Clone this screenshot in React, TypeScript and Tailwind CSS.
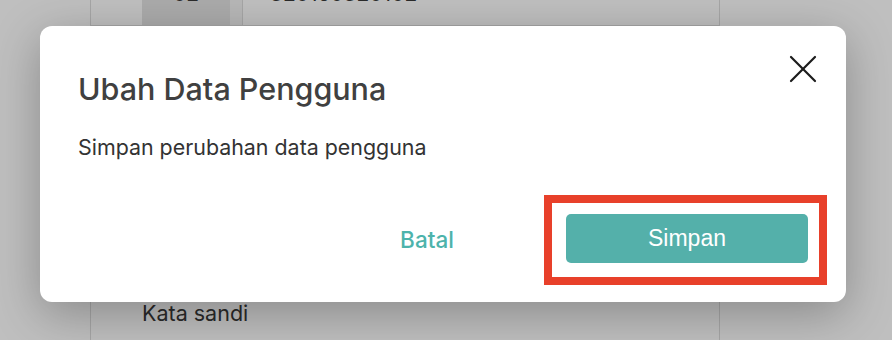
import { X } from "lucide-react";

export default function App() {
  return (
    <div className="relative h-[340px] w-[892px] overflow-hidden bg-white font-['Inter',sans-serif]">
      {/* Page underneath the dialog */}
      <div className="ml-[90px] flex h-full w-[630px] flex-col border-x border-[#dedede]">
        <div className="-mt-[24px] flex h-[50px] items-end border-b border-[#dedede]">
          <div className="ml-[51px] flex h-full w-[88px] items-end justify-center bg-[#e5e5e5] pb-[21px] text-[21px] leading-none text-[#383838]">
            02
          </div>
          <div className="h-full w-[12px] bg-[#f4f4f4]" />
          <div className="h-full border-l border-[#dedede]" />
          <div className="pb-[21px] pl-[27px] text-[21px] leading-none text-[#383838]">320150320102</div>
        </div>
        <div className="flex-1" />
        <div className="pb-[13px] pl-[51px] text-[21.5px] leading-[28px] text-[#383838]">Kata sandi</div>
      </div>

      {/* Overlay + dialog */}
      <div className="absolute inset-0 bg-black/25">
        <div className="absolute left-[40px] top-[26px] flex h-[276px] w-[806px] flex-col rounded-[12px] bg-white shadow-[0_12px_48px_rgba(0,0,0,0.28)]">
          <button className="absolute right-[19px] top-[19px] text-[#1c1c1c]" aria-label="Tutup">
            <X size={48} strokeWidth={1.1} />
          </button>

          <h2 className="pl-[38px] pt-[45px] text-[30.5px] font-medium leading-[36px] text-[#404040]">
            Ubah Data Pengguna
          </h2>
          <p className="pl-[38px] pt-[26px] text-[21.4px] leading-[28px] text-[#333333]">
            Simpan perubahan data pengguna
          </p>

          <div className="mt-auto flex items-center justify-end pb-[17px] pr-[19px]">
            <button className="w-[106px] text-[22.5px] font-medium text-[#4db3ab]">Batal</button>
            <div className="ml-[64px] border-[8px] border-[#e8402a] pb-[14px] pl-[14px] pr-[11px] pt-[11px]">
              <button className="flex h-[49px] w-[242px] items-center justify-center rounded-[5px] bg-[#54b0aa] font-['Liberation_Sans',sans-serif] text-[23px] text-white">
                Simpan
              </button>
            </div>
          </div>
        </div>
      </div>
    </div>
  );
}
